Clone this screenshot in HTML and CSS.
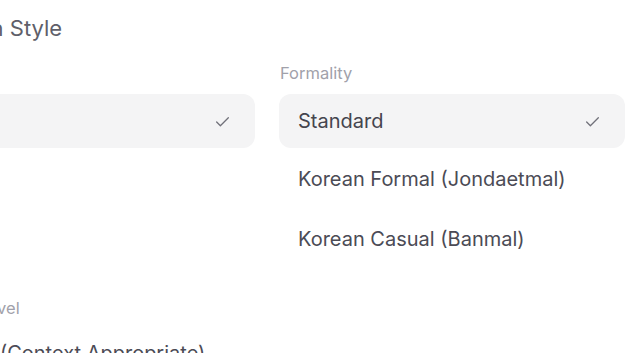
FILE: index.html
```html
<!DOCTYPE html>
<html lang="en">
<head>
    <meta charset="UTF-8">
    <meta name="viewport" content="width=device-width, initial-scale=1.0">
    <title>Translation Style</title>
    <link rel="stylesheet" href="styles.css">
</head>
<body>
    <div class="page">
        <h2 class="section-title">Translation Style</h2>

        <div class="fields">
            <div class="field">
                <div class="field-label">Tone</div>
                <div class="select">
                    <span>Natural</span>
                    <svg class="check" viewBox="0 0 16 16"><path d="M2.5 8.5l3.5 3.5 7.5-7.5"/></svg>
                </div>
            </div>

            <div class="field">
                <div class="field-label">Formality</div>
                <div class="select">
                    <span>Standard</span>
                    <svg class="check" viewBox="0 0 16 16"><path d="M2.5 8.5l3.5 3.5 7.5-7.5"/></svg>
                </div>
                <ul class="options">
                    <li>Korean Formal (Jondaetmal)</li>
                    <li>Korean Casual (Banmal)</li>
                </ul>
            </div>
        </div>

        <div class="field field-wide">
            <div class="field-label">Honorific Level</div>
            <ul class="options">
                <li>Natural (Context Appropriate)</li>
            </ul>
        </div>
    </div>
</body>
</html>
```

FILE: styles.css
```css
* {margin: 0; padding: 0; box-sizing: border-box;}
ul {list-style: none;}
body {background: #fff; font-family: Inter, "Noto Sans", sans-serif; color: #3f3f46; overflow: hidden;}

.page {margin-left: -91px; width: 716px; padding-top: 15px;}

.section-title {font-size: 22px; font-weight: 400; line-height: 26px; color: #5f5f6a; text-indent: -20px;}

.fields {display: grid; grid-template-columns: 346px 346px; column-gap: 24px; margin-top: 22px;}

.field-label {font-size: 16.5px; line-height: 20px; color: #a1a1aa; padding-left: 1px; margin-bottom: 11px;}

.select {height: 54px; border-radius: 12px; background: #f4f4f5; padding: 0 24px 0 19px; display: flex; align-items: center; justify-content: space-between; font-size: 20px; color: #45454e;}
.check {width: 17px; height: 17px; fill: none; stroke: #71717a; stroke-width: 1.2; stroke-linecap: round; stroke-linejoin: round;}

.options {margin-top: 1px;}
.options li {height: 60px; display: flex; align-items: center; padding-left: 19px; font-size: 20px; color: #4b4b55;}

.field-wide {margin-top: 29px;}
.field-wide .field-label {margin-bottom: 5px; text-indent: -8px;}
.field-wide .options {margin-top: 0;}
.field-wide .options li {padding-left: 17px;}
```
